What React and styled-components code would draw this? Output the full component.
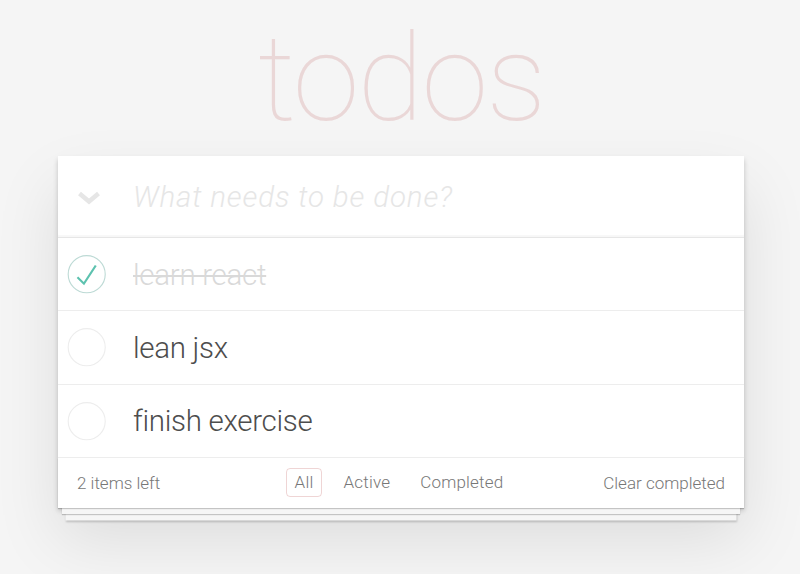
import styled, { createGlobalStyle } from "styled-components";

const GlobalStyle = createGlobalStyle`
	html, body {
		margin: 0;
		padding: 0;
	}
	body {
		background: #f5f5f5;
		color: #4d4d4d;
		font-family: Roboto, "Liberation Sans", sans-serif;
		font-weight: 300;
		-webkit-font-smoothing: antialiased;
	}
`;

const Page = styled.div`
	width: 686px;
	margin: 0 56px 0 58px;
	padding-bottom: 80px;
`;

const Title = styled.h1`
	margin: 0;
	padding-top: 19px;
	height: 137px;
	font-size: 121px;
	line-height: 121px;
	font-weight: 100;
	letter-spacing: -2px;
	text-align: center;
	color: rgba(175, 47, 47, 0.15);
	text-rendering: optimizeLegibility;
`;

const Card = styled.section`
	position: relative;
	background: #fff;
	box-shadow: 0 2.5px 5px 0 rgba(0, 0, 0, 0.2), 0 31px 62px 0 rgba(0, 0, 0, 0.1);
`;

const Header = styled.header`
	display: grid;
	grid-template-columns: 75px 1fr;
	align-items: center;
	height: 81px;
	box-shadow: inset 0 -2px 1px rgba(0, 0, 0, 0.03);
`;

const ToggleAll = styled.div`
	display: flex;
	padding: 2px 0 0 19px;
`;

const NewTodo = styled.input`
	border: none;
	outline: none;
	background: transparent;
	padding: 0 20px 0 0;
	font-family: inherit;
	font-size: 29.5px;
	font-weight: 300;
	line-height: 42px;
	color: #4d4d4d;
	&::placeholder {
		font-style: italic;
		font-weight: 300;
		letter-spacing: 0.85px;
		color: #e6e6e6;
	}
`;

const List = styled.ul`
	margin: 0;
	padding: 0;
	list-style: none;
	border-top: 1px solid #e6e6e6;
`;

const Item = styled.li`
	display: grid;
	grid-template-columns: 75px 1fr;
	align-items: center;
	border-bottom: 1px solid #ededed;
`;

const Label = styled.label`
	padding: 18.75px 18px 17.5px 0;
	font-size: 29.5px;
	line-height: 36px;
	font-weight: 300;
	letter-spacing: -0.3px;
	color: ${(p) => (p.$done ? "#d9d9d9" : "#4d4d4d")};
	text-decoration: ${(p) => (p.$done ? "line-through" : "none")};
`;

const Footer = styled.footer`
	position: relative;
	display: grid;
	grid-template-columns: 1fr auto 1fr;
	align-items: center;
	height: 25px;
	padding: 10.5px 19px 14.5px;
	font-size: 17px;
	color: #777;
	&:before {
		content: "";
		position: absolute;
		right: 0;
		bottom: 0;
		left: 0;
		height: 50px;
		overflow: hidden;
		box-shadow: 0 1px 1px rgba(0, 0, 0, 0.2), 0 10px 0 -4px #f6f6f6,
			0 11px 1px -4px rgba(0, 0, 0, 0.2), 0 20px 0 -7.5px #f6f6f6,
			0 21px 2px -7.5px rgba(0, 0, 0, 0.2);
	}
`;

const Count = styled.span`
	position: relative;
`;

const Filters = styled.ul`
	position: relative;
	display: flex;
	margin: 0 4px 0 0;
	padding: 0;
	list-style: none;
`;

const Filter = styled.li`
	margin: 0 6px;
	padding: 3px 8px;
	border: 1px solid ${(p) => (p.$selected ? "rgba(175, 47, 47, 0.2)" : "transparent")};
	border-radius: 4px;
	line-height: 21px;
	letter-spacing: 0.2px;
	color: #777;
`;

const Clear = styled.span`
	position: relative;
	justify-self: end;
`;

function Toggle({ done }) {
	return (
		<svg width="50" height="50" viewBox="-10 -18 100 135">
			<circle
				cx="50"
				cy="50"
				r="50"
				fill="none"
				stroke={done ? "#bddad5" : "#ededed"}
				strokeWidth="3"
			/>
			{done && <path fill="#5dc2af" d="M72 25L42 71 27 56l-4 4 20 20 34-52z" />}
		</svg>
	);
}

const todos = [
	{ text: "learn react", done: true },
	{ text: "lean jsx", done: false },
	{ text: "finish exercise", done: false },
];

export default function App() {
	return (
		<>
			<GlobalStyle />
			<Page>
				<Title>todos</Title>
				<Card>
					<Header>
						<ToggleAll>
							<svg width="24" height="14" viewBox="0 0 24 14">
								<path
									d="M2.5 2.5 L12 10.5 L21.5 2.5"
									fill="none"
									stroke="#e6e6e6"
									strokeWidth="4.5"
								/>
							</svg>
						</ToggleAll>
						<NewTodo placeholder="What needs to be done?" />
					</Header>
					<List>
						{todos.map((t) => (
							<Item key={t.text}>
								<Toggle done={t.done} />
								<Label $done={t.done}>{t.text}</Label>
							</Item>
						))}
					</List>
					<Footer>
						<Count>2 items left</Count>
						<Filters>
							<Filter $selected>All</Filter>
							<Filter>Active</Filter>
							<Filter>Completed</Filter>
						</Filters>
						<Clear>Clear completed</Clear>
					</Footer>
				</Card>
			</Page>
		</>
	);
}
